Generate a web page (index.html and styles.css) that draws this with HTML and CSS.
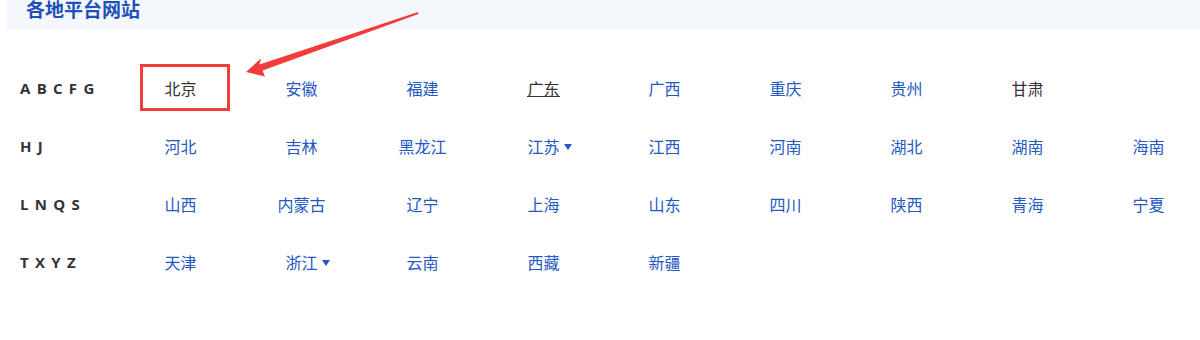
FILE: index.html
```html
<!DOCTYPE html>
<html lang="zh-CN">
<head>
    <meta charset="UTF-8">
    <meta name="viewport" content="width=device-width, initial-scale=1.0">
    <title>各地平台网站</title>
    <link rel="stylesheet" href="styles.css">
</head>
<body>
    <div class="page">
        <div class="panel-head">
            <h2>各地平台网站</h2>
        </div>
        <div class="region-list">
            <div class="region-row">
                <span class="letters">A B C F G</span>
                <ul class="cities">
                    <li><a class="active" href="#">北京</a><span class="mark-box"></span></li>
                    <li><a href="#">安徽</a></li>
                    <li><a href="#">福建</a></li>
                    <li><a class="hover" href="#">广东</a></li>
                    <li><a href="#">广西</a></li>
                    <li><a href="#">重庆</a></li>
                    <li><a href="#">贵州</a></li>
                    <li><a class="dark" href="#">甘肃</a></li>
                </ul>
            </div>
            <div class="region-row">
                <span class="letters">H J</span>
                <ul class="cities">
                    <li><a href="#">河北</a></li>
                    <li><a href="#">吉林</a></li>
                    <li><a href="#">黑龙江</a></li>
                    <li><a class="more" href="#">江苏</a></li>
                    <li><a href="#">江西</a></li>
                    <li><a href="#">河南</a></li>
                    <li><a href="#">湖北</a></li>
                    <li><a href="#">湖南</a></li>
                    <li><a href="#">海南</a></li>
                </ul>
            </div>
            <div class="region-row">
                <span class="letters">L N Q S</span>
                <ul class="cities">
                    <li><a href="#">山西</a></li>
                    <li><a href="#">内蒙古</a></li>
                    <li><a href="#">辽宁</a></li>
                    <li><a href="#">上海</a></li>
                    <li><a href="#">山东</a></li>
                    <li><a href="#">四川</a></li>
                    <li><a href="#">陕西</a></li>
                    <li><a href="#">青海</a></li>
                    <li><a href="#">宁夏</a></li>
                </ul>
            </div>
            <div class="region-row">
                <span class="letters">T X Y Z</span>
                <ul class="cities">
                    <li><a href="#">天津</a></li>
                    <li><a class="more" href="#">浙江</a></li>
                    <li><a href="#">云南</a></li>
                    <li><a href="#">西藏</a></li>
                    <li><a href="#">新疆</a></li>
                </ul>
            </div>
        </div>
        <svg class="mark-arrow" width="1200" height="340" viewBox="0 0 1200 340">
            <polygon points="246,72 261,58.5 259.5,64.5 418,12 418.5,14 262.5,70.5 265,76.5" fill="#f23b3b"/>
        </svg>
    </div>
</body>
</html>
```

FILE: styles.css
```css
body {
    margin: 0;
    background-color: #fff;
    font-family: "Noto Sans CJK SC", "Microsoft YaHei", sans-serif;
}
.page {
    position: relative;
    width: 1200px;
    height: 340px;
    overflow: hidden;
}
.panel-head {
    margin-left: 6px;
    height: 29px;
    background-color: #f4f8fd;
    padding-left: 20px;
}
.panel-head h2 {
    margin: 0;
    position: relative;
    top: -2px;
    font-size: 19px;
    line-height: 22px;
    font-weight: bold;
    color: #2150b8;
}
.region-list {
    margin-top: 30px;
    padding-left: 20px;
}
.region-row {
    display: flex;
    align-items: center;
    height: 58px;
}
.letters {
    width: 100px;
    flex-shrink: 0;
    font-family: "Open Sans", sans-serif;
    font-size: 15px;
    font-weight: bold;
    letter-spacing: 1.2px;
    color: #333;
}
.cities {
    display: flex;
    margin: 0;
    padding: 0;
    list-style: none;
}
.cities li {
    position: relative;
    width: 121px;
    height: 58px;
    flex-shrink: 0;
    display: flex;
    align-items: center;
    justify-content: center;
}
.cities a {
    position: relative;
    font-size: 16px;
    line-height: 20px;
    color: #2458c2;
    text-decoration: none;
}
.cities a.active,
.cities a.dark { color: #333; }
.cities a.hover {
    color: #333;
    line-height: 16px;
    border-bottom: 1px solid #333;
}
.cities a.more::after {
    content: "";
    position: absolute;
    left: 100%;
    top: 8px;
    margin-left: 4px;
    border-left: 4px solid transparent;
    border-right: 4px solid transparent;
    border-top: 6px solid #2458c2;
}
.mark-box {
    position: absolute;
    left: 20px;
    top: 5px;
    width: 90px;
    height: 47px;
    box-sizing: border-box;
    border: 3px solid #f23b3b;
}
.mark-arrow {
    position: absolute;
    left: 0;
    top: 0;
    pointer-events: none;
}
```
